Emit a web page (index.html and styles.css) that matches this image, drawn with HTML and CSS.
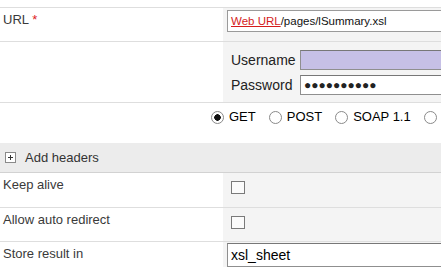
FILE: index.html
```html
<!DOCTYPE html>
<html lang="en">
<head>
    <meta charset="UTF-8">
    <meta name="viewport" content="width=device-width, initial-scale=1.0">
    <title>Request properties</title>
    <link rel="stylesheet" href="styles.css">
</head>
<body>

    <div class="frame">

        <!-- URL -->
        <div class="row row-url">
            <div class="label">URL <span class="req">*</span></div>
            <div class="value">
                <div class="url-box"><span class="var">Web URL</span>/pages/lSummary.xsl</div>
            </div>
        </div>

        <!-- Credentials -->
        <div class="row row-auth">
            <div class="label"></div>
            <div class="value auth">
                <label>Username</label>
                <input class="field user" type="text" value="">
                <label>Password</label>
                <input class="field pass" type="text" value="●●●●●●●●●●">
            </div>
        </div>

        <!-- Method -->
        <div class="row row-method">
            <label class="radio"><input type="radio" name="method" checked> GET</label>
            <label class="radio"><input type="radio" name="method"> POST</label>
            <label class="radio"><input type="radio" name="method"> SOAP 1.1</label>
            <label class="radio"><input type="radio" name="method" aria-label="SOAP 1.2"></label>
        </div>

        <div class="band">
            <svg class="expander" width="11" height="11" viewBox="0 0 11 11">
                <rect x="0.5" y="0.5" width="10" height="10" fill="#fff" stroke="#8a8a8a"/>
                <path d="M3 5.5h5M5.5 3v5" stroke="#333" stroke-width="1"/>
            </svg>
            Add headers
        </div>

        <div class="row row-check first">
            <div class="label">Keep alive</div>
            <div class="value"><input class="check" type="checkbox"></div>
        </div>

        <div class="row row-check">
            <div class="label">Allow auto redirect</div>
            <div class="value"><input class="check" type="checkbox"></div>
        </div>

        <div class="row row-store">
            <div class="label">Store result in</div>
            <div class="value"><input class="field store" type="text" value="xsl_sheet"></div>
        </div>

    </div>

</body>
</html>
```

FILE: styles.css
```css
* {
    box-sizing: border-box;
}
body {
    margin: 0;
    font-family: "Liberation Sans", Arial, sans-serif;
    font-size: 13px;
    color: #3a3a3a;
    background-color: white;
}
.frame {
    width: 441px;
    margin-top: 7px;
    overflow: hidden;
}
.row {
    display: flex;
    border-top: 1px solid #dedede;
    height: 34px;
}
.label {
    width: 223px;
    flex-shrink: 0;
    padding: 4px 3px;
    line-height: 16px;
    background-color: white;
}
.req {
    color: #d22;
}
.value {
    flex: 1;
    background-color: #f4f4f4;
    padding: 2px 4px;
}
.url-box {
    width: 260px;
    height: 22px;
    border: 1px solid #9a9a9a;
    background-color: white;
    color: #111;
    font-size: 11.5px;
    line-height: 20px;
    padding-left: 3px;
    white-space: nowrap;
}
.var {
    color: #d41c1c;
    text-decoration: underline;
}
.row-auth {
    height: 61px;
}
.auth {
    display: grid;
    grid-template-columns: 69px 200px;
    grid-auto-rows: 20px;
    row-gap: 5px;
    padding: 8px 0 0 8px;
    align-items: center;
}
.auth label {
    font-size: 14px;
    color: #222;
}
.field {
    font-family: "Liberation Sans", Arial, sans-serif;
    border: 1px solid #8f8f8f;
    border-top-color: #777;
    background-color: white;
    color: #000;
    padding: 0 3px;
    margin: 0;
    outline: none;
}
.user {
    height: 20px;
    background-color: #c6c0e6;
}
.pass {
    height: 20px;
    font-size: 12px;
    letter-spacing: 0;
    color: #222;
}
.row-method {
    height: 41px;
    padding: 6px 0 0 211px;
    gap: 13px;
    line-height: 16px;
    color: #000;
    white-space: nowrap;
}
.radio {
    display: flex;
    align-items: flex-start;
    gap: 3px;
}
.radio input {
    appearance: none;
    width: 13px;
    height: 13px;
    margin: 2px 2px 0 0;
    border: 1px solid #8a8a8a;
    border-radius: 50%;
    background-color: white;
    flex-shrink: 0;
}
.radio input:checked {
    background: radial-gradient(circle, #111 0 3px, white 3.5px);
}
.band {
    display: flex;
    align-items: center;
    gap: 9px;
    height: 29px;
    padding-left: 5px;
    background-color: #ececec;
    color: #333;
}
.expander {
    flex-shrink: 0;
}
.row-check {
    height: 34px;
}
.row-check.first {
    height: 35px;
    border-top-color: #d2d2d2;
}
.row-check .value {
    padding: 8px 8px 0;
}
.check {
    appearance: none;
    display: block;
    width: 14px;
    height: 13px;
    margin: 0;
    border: 1px solid #7a7a7a;
    background-color: #fbfbfb;
}
.row-store .value {
    padding: 1px 4px 0;
}
.store {
    width: 260px;
    height: 24px;
    font-size: 14px;
}
```
